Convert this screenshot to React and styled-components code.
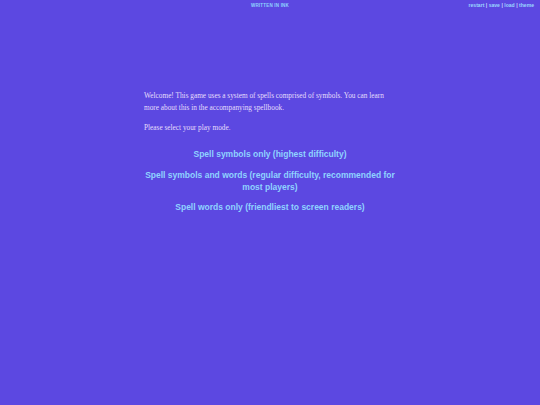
import styled, { createGlobalStyle } from "styled-components";

const GlobalStyle = createGlobalStyle`
  html, body {
    margin: 0;
    padding: 0;
    background: #5c48e1;
  }
`;

const Page = styled.div`
  min-height: 405px;
  background: #5c48e1;
  font-family: "Liberation Serif", serif;
  color: #e4defc;
`;

const Header = styled.header`
  display: grid;
  grid-template-columns: 1fr auto 1fr;
  align-items: center;
  padding: 1px 6px 0;
  height: 8px;
`;

const Title = styled.h1`
  grid-column: 2;
  margin: 0;
  font-family: "Liberation Sans", sans-serif;
  font-size: 4.5px;
  font-weight: bold;
  letter-spacing: 0.2px;
  color: #8fd3ff;
  text-transform: uppercase;
`;

const Controls = styled.nav`
  grid-column: 3;
  justify-self: end;
  font-family: "Liberation Sans", sans-serif;
  font-size: 5.1px;
  font-weight: bold;
  color: #c8d6ff;

  & a {
    color: #9ad8ff;
    text-decoration: none;
    cursor: pointer;
  }
`;

const Story = styled.main`
  width: 252px;
  margin: 81px auto 0;
`;

const Para = styled.p`
  margin: 0 0 8px;
  font-size: 7.3px;
  line-height: 12px;
`;

const Choices = styled.div`
  margin: 14px -4px 0;
  display: flex;
  flex-direction: column;
  gap: 8.5px;
`;

const Choice = styled.a`
  display: block;
  text-align: center;
  font-family: "Liberation Sans", sans-serif;
  font-weight: bold;
  font-size: 8.5px;
  line-height: 12px;
  color: #8fd3ff;
  cursor: pointer;
`;

const choices = [
  "Spell symbols only (highest difficulty)",
  "Spell symbols and words (regular difficulty, recommended for most players)",
  "Spell words only (friendliest to screen readers)",
];

export default function App() {
  return (
    <Page>
      <GlobalStyle />
      <Header>
        <Title>Written in Ink</Title>
        <Controls>
          <a>restart</a> | <a>save</a> | <a>load</a> | <a>theme</a>
        </Controls>
      </Header>
      <Story>
        <Para>
          Welcome! This game uses a system of spells comprised of symbols. You
          can learn more about this in the accompanying spellbook.
        </Para>
        <Para>Please select your play mode.</Para>
        <Choices>
          {choices.map((c) => (
            <Choice key={c}>{c}</Choice>
          ))}
        </Choices>
      </Story>
    </Page>
  );
}
